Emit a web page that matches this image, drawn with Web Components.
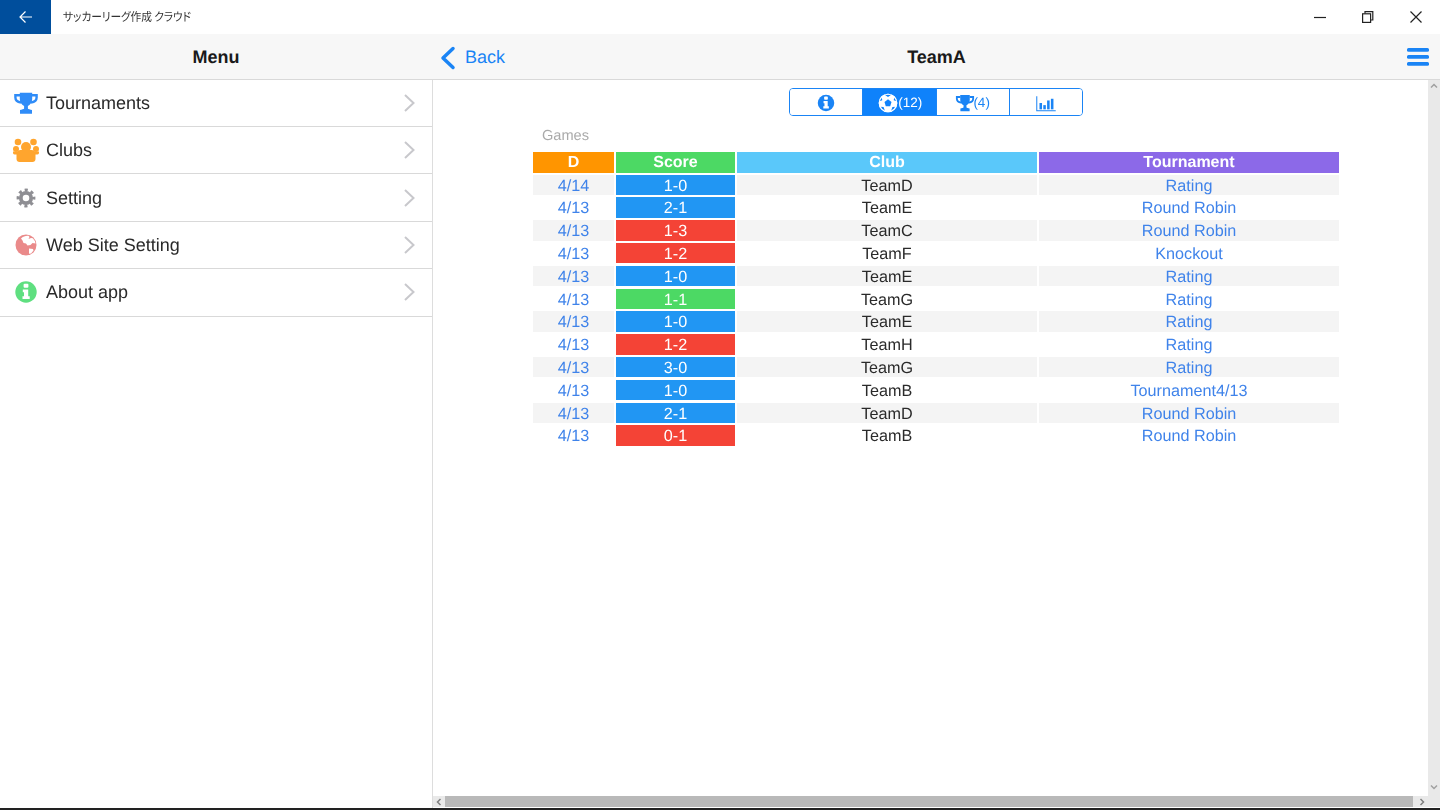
<!DOCTYPE html>
<html lang="ja">
<head>
<meta charset="utf-8">
<title>TeamA</title>
<style>
  html, body { margin: 0; height: 100%; overflow: hidden; background: #fff; }
  body { font-family: "Liberation Sans", Arial, sans-serif; text-rendering: geometricPrecision; }
</style>
</head>
<body>
<app-window>
  <title-bar slot="top" label="サッカーリーグ作成 クラウド"></title-bar>
  <menu-panel slot="left" heading="Menu">
    <menu-item icon="trophy" tint="#2f8cf8" label="Tournaments"></menu-item>
    <menu-item icon="group" tint="#ffa52e" label="Clubs"></menu-item>
    <menu-item icon="gear" tint="#8e8e93" label="Setting"></menu-item>
    <menu-item icon="globe" tint="#ea8a8a" label="Web Site Setting"></menu-item>
    <menu-item icon="info" tint="#5fdf80" label="About app"></menu-item>
  </menu-panel>
  <detail-panel slot="right" heading="TeamA">
    <seg-control>
      <seg-button icon="info" size="20"></seg-button>
      <seg-button icon="ball" size="24" count="(12)" active></seg-button>
      <seg-button icon="trophy" size="20" count="(4)"></seg-button>
      <seg-button icon="chart" size="22"></seg-button>
    </seg-control>
    <games-table caption="Games">
      <game-row date="4/14" score="1-0" result="win" club="TeamD" tournament="Rating"></game-row>
      <game-row date="4/13" score="2-1" result="win" club="TeamE" tournament="Round Robin"></game-row>
      <game-row date="4/13" score="1-3" result="lose" club="TeamC" tournament="Round Robin"></game-row>
      <game-row date="4/13" score="1-2" result="lose" club="TeamF" tournament="Knockout"></game-row>
      <game-row date="4/13" score="1-0" result="win" club="TeamE" tournament="Rating"></game-row>
      <game-row date="4/13" score="1-1" result="draw" club="TeamG" tournament="Rating"></game-row>
      <game-row date="4/13" score="1-0" result="win" club="TeamE" tournament="Rating"></game-row>
      <game-row date="4/13" score="1-2" result="lose" club="TeamH" tournament="Rating"></game-row>
      <game-row date="4/13" score="3-0" result="win" club="TeamG" tournament="Rating"></game-row>
      <game-row date="4/13" score="1-0" result="win" club="TeamB" tournament="Tournament4/13"></game-row>
      <game-row date="4/13" score="2-1" result="win" club="TeamD" tournament="Round Robin"></game-row>
      <game-row date="4/13" score="0-1" result="lose" club="TeamB" tournament="Round Robin"></game-row>
    </games-table>
  </detail-panel>
</app-window>

<script>
const ICONS = {
  trophy: `<path fill="currentColor" d="M6.800 2.700h12.400v6.300c0 3.600-2.300 6-4.300 7v2.500c0 .8 2.600 1 4.100 1.500v3.700H7v-3.700c1.500-.5 4.100-.7 4.100-1.500V16c-2-1-4.300-3.400-4.300-7z"/>
    <path fill="none" stroke="currentColor" stroke-width="2.400" d="M7 5.200H2.400v2.300c0 2.800 2.400 4.600 5.600 5M19 5.200h4.600v2.300c0 2.800-2.400 4.600-5.600 5"/>`,
  group: `<g fill="currentColor"><circle cx="5" cy="5" r="3.300"/><circle cx="20.500" cy="5" r="3.300"/><circle cx="3" cy="12" r="3"/><circle cx="23" cy="12" r="3"/>
    <circle cx="13" cy="10" r="5"/><path d="M3.500 16.500c0-2.500 2-3.500 4-3.500h11c2 0 4 1 4 3.500V22c0 1.800-1.300 3-3 3h-13c-1.700 0-3-1.200-3-3z"/>
    <path d="M0 14.500h4v3H1.500C.5 17.500 0 16.500 0 15.500zM26 14.500h-4v3h2.500c1 0 1.500-1 1.500-2z"/></g>`,
  gear: `<g fill="none" stroke="currentColor"><circle cx="13" cy="13" r="5.200" stroke-width="3.800"/><circle cx="13" cy="13" r="8" stroke-width="2.800" stroke-dasharray="3.140 3.140" stroke-dashoffset="1.570"/></g>`,
  globe: `<circle cx="13" cy="13" r="10.500" fill="currentColor"/>
    <path fill="#fff" d="M8 6.500c2-2 5-3 7.500-2.700l1 1.200-1 2 2.500-1 1.800.3 2.200 3 .5 2.200-3-.5-2 2-3 .5-1.500-2-2.500-.5-1-2.500zM16 16.500l4 .5.500 1.500-2.500 3-2 .3z"/>`,
  info: `<circle cx="13" cy="13" r="10.700" fill="currentColor"/>
    <rect x="10.600" y="4.700" width="4.800" height="4" rx="1" fill="#fff"/><path fill="#fff" d="M9.800 10.500h5.400v6.800h1.500V20H9.500v-2.700H11v-4.100H9.800z"/>`,
  ball: `<circle cx="13" cy="13" r="10" fill="#fff"/>
    <g fill="currentColor"><path d="M13 9l3.800 2.800-1.400 4.600h-4.800l-1.400-4.600z"/><path d="M9 3l4 .5 4-.5v.8L13 6.500 9 3.800zM20 5.500l3 6-3.800-1.500zM6 5.500l.8 4.500-3.800 1.500zM3.500 17l4.700.2 1.500 4.500-3 .2zM22.500 17l-3.200 4.900-3-.2 1.500-4.500z"/></g>
    <circle cx="13" cy="13" r="9.500" fill="none" stroke="#fff" stroke-width="1.300"/>`,
  chart: `<g fill="currentColor"><path d="M1.500 5h1.200v16.500h21.800v1.300h-23z"/><rect x="5.300" y="13" width="3" height="7.500"/><rect x="9.800" y="15.500" width="3" height="5"/><rect x="14.300" y="10" width="3" height="10.500"/><rect x="18.800" y="8" width="3" height="12.500"/></g>`
};

class AppWindow extends HTMLElement {
  constructor() {
    super();
    this.attachShadow({ mode: "open" }).innerHTML = `
      <style>
        :host { display: flex; flex-direction: column; width: 1440px; height: 810px; overflow: hidden; filter: blur(.3px); }
        .body { display: flex; flex: 1; min-height: 0; }
        .edge { height: 2px; background: #222; flex: none; }
      </style>
      <slot name="top"></slot>
      <div class="body"><slot name="left"></slot><slot name="right"></slot></div>
      <div class="edge"></div>`;
  }
}

class FaIcon extends HTMLElement {
  connectedCallback() {
    const size = this.getAttribute("size") || 26;
    this.attachShadow({ mode: "open" }).innerHTML = `
      <style>:host { display: inline-flex; flex: none; } svg { display: block; }</style>
      <svg width="${size}" height="${size}" viewBox="0 0 26 26">${ICONS[this.getAttribute("name")]}</svg>`;
  }
}

class TitleBar extends HTMLElement {
  connectedCallback() {
    this.attachShadow({ mode: "open" }).innerHTML = `
      <style>
        :host { display: flex; align-items: center; height: 34px; flex: none; background: #fff; }
        .back { width: 51px; height: 34px; background: #004e9c; display: flex; align-items: center; justify-content: center; }
        .label { margin: -2px 0 0 12px; flex: 1; font: 12px "Noto Sans CJK JP", sans-serif; color: #333; font-feature-settings: "palt"; letter-spacing: -.1px; transform: scaleX(.895); transform-origin: left center; }
        .ctl { width: 48px; display: flex; justify-content: center; }
        svg { display: block; }
      </style>
      <div class="back"><svg width="14" height="14" viewBox="0 0 14 14" fill="none" stroke="#fff" stroke-width="1.200"><path d="M13 7H1M6.500 1.500L1 7l5.500 5.500"/></svg></div>
      <div class="label">${this.getAttribute("label")}</div>
      <div class="ctl"><svg width="12" height="12" viewBox="0 0 12 12" stroke="#222" stroke-width="1.200"><path d="M0 6.500h12"/></svg></div>
      <div class="ctl"><svg width="12" height="12" viewBox="0 0 12 12" fill="none" stroke="#222" stroke-width="1.200"><path d="M3 2.500V.6h7.800v8.400H9"/><rect x=".6" y="2.800" width="8" height="8.600"/></svg></div>
      <div class="ctl"><svg width="12" height="12" viewBox="0 0 12 12" stroke="#222" stroke-width="1.200"><path d="M.5.500l11 11M11.500.500l-11 11"/></svg></div>`;
  }
}

class MenuPanel extends HTMLElement {
  connectedCallback() {
    this.attachShadow({ mode: "open" }).innerHTML = `
      <style>
        :host { display: flex; flex-direction: column; width: 433px; flex: none; height: 100%; }
        .head { height: 41.600px; display: flex; align-items: center; justify-content: center; background: #f7f7f7; border-bottom: 1px solid #d9d9d9; font-size: 18px; font-weight: bold; color: #1a1a1a; padding-top: 3px; padding-right: 1px; flex: none; }
        .list { flex: 1; border-right: 1px solid #ddd; }
      </style>
      <div class="head">${this.getAttribute("heading")}</div>
      <div class="list"><slot></slot></div>`;
  }
}

class MenuItem extends HTMLElement {
  connectedCallback() {
    this.attachShadow({ mode: "open" }).innerHTML = `
      <style>
        :host { display: flex; align-items: center; height: 47.400px; box-sizing: border-box; border-bottom: 1px solid #d9d9d9; padding-left: 13px; font-size: 18px; color: #2a2a2a; }
        fa-icon { color: ${this.getAttribute("tint")}; margin-right: 7px; }
        .label { flex: 1; padding-top: 1px; }
        svg { margin-right: 17px; display: block; }
      </style>
      <fa-icon name="${this.getAttribute("icon")}"></fa-icon>
      <div class="label">${this.getAttribute("label")}</div>
      <svg width="11" height="18" viewBox="0 0 11 18" fill="none" stroke="#c8c8cc" stroke-width="2"><path d="M1 1l8.500 8L1 17"/></svg>`;
  }
}

class DetailPanel extends HTMLElement {
  connectedCallback() {
    this.attachShadow({ mode: "open" }).innerHTML = `
      <style>
        :host { display: flex; flex-direction: column; flex: 1; min-width: 0; height: 100%; }
        .head { height: 41.600px; padding-top: 3px; flex: none; display: grid; grid-template-columns: 1fr auto 1fr; align-items: center; background: #f7f7f7; border-bottom: 1px solid #d9d9d9; }
        .back { display: flex; align-items: center; gap: 9px; padding-left: 7px; color: #1a84f5; font-size: 18px; }
        .title { font-size: 18px; font-weight: bold; color: #1a1a1a; }
        .menu { justify-self: end; margin: -2px 11px 0 0; display: block; }
        .middle { flex: 1; display: flex; min-height: 0; }
        .content { flex: 1; padding: 8px 0 0 11px; display: flex; flex-direction: column; align-items: center; }
        .vbar { width: 12px; flex: none; background: #e9e9e9; display: flex; flex-direction: column; justify-content: space-between; align-items: center; padding: 3px 0 6px; box-sizing: border-box; }
        .hbar { height: 11px; flex: none; background: #e9e9e9; display: flex; align-items: center; margin-bottom: 1px; }
        .thumb { flex: 1; height: 100%; background: #b9b9b9; margin-right: 3px; }
        .end { width: 12px; display: flex; justify-content: center; }
        svg { display: block; }
      </style>
      <div class="head">
        <div class="back"><svg width="16" height="24" viewBox="0 0 16 24" fill="none" stroke="#1a84f5" stroke-width="3.500" stroke-linecap="round" stroke-linejoin="round"><path d="M13 2.500L3 12l10 9.500"/></svg>Back</div>
        <div class="title">${this.getAttribute("heading")}</div>
        <svg class="menu" width="22" height="18" viewBox="0 0 22 18" fill="#1a84f5"><rect y="0" width="22" height="3.800" rx="1.500"/><rect y="7" width="22" height="3.800" rx="1.500"/><rect y="14" width="22" height="3.800" rx="1.500"/></svg>
      </div>
      <div class="middle">
        <div class="content"><slot></slot></div>
        <div class="vbar">
          <svg width="8" height="6" viewBox="0 0 8 6" fill="none" stroke="#a0a0a0" stroke-width="1.500"><path d="M1 4.500L4 1.500l3 3"/></svg>
          <svg width="8" height="6" viewBox="0 0 8 6" fill="none" stroke="#a0a0a0" stroke-width="1.500"><path d="M1 1.500L4 4.500l3-3"/></svg>
        </div>
      </div>
      <div class="hbar">
        <div class="end"><svg width="6" height="8" viewBox="0 0 6 8" fill="none" stroke="#808080" stroke-width="1.500"><path d="M4.500 1L1.500 4l3 3"/></svg></div>
        <div class="thumb"></div>
        <div class="end"><svg width="6" height="8" viewBox="0 0 6 8" fill="none" stroke="#808080" stroke-width="1.500"><path d="M1.500 1L4.500 4l-3 3"/></svg></div>
        <div class="end"></div>
      </div>`;
  }
}

class SegControl extends HTMLElement {
  constructor() {
    super();
    this.attachShadow({ mode: "open" }).innerHTML = `
      <style>
        :host { display: flex; width: 294px; height: 28px; box-sizing: border-box; border: 1px solid #1a84f5; border-radius: 4px; overflow: hidden; flex: none; }
      </style>
      <slot></slot>`;
  }
}

class SegButton extends HTMLElement {
  connectedCallback() {
    const active = this.hasAttribute("active");
    this.attachShadow({ mode: "open" }).innerHTML = `
      <style>
        :host { flex: 1; display: flex; align-items: center; justify-content: center; padding-top: 3px; font-size: 13.500px; color: ${active ? "#fff" : "#1a84f5"}; background: ${active ? "#0f82fb" : "#fff"}; border-left: 1px solid #1a84f5; }
        :host(:first-child) { border-left: none; }
        fa-icon { color: ${active ? "#0f82fb" : "#1a84f5"}; }
        span { position: relative; top: -1px; margin-left: -2px; }
      </style>
      <fa-icon name="${this.getAttribute("icon")}" size="${this.getAttribute("size")}"></fa-icon>
      ${this.getAttribute("count") ? `<span>${this.getAttribute("count")}</span>` : ""}`;
  }
}

const COLUMNS = "81px 119px 300px 300px";

class GamesTable extends HTMLElement {
  connectedCallback() {
    this.attachShadow({ mode: "open" }).innerHTML = `
      <style>
        :host { display: block; width: 806px; margin-top: 10px; }
        .caption { font-size: 14.600px; line-height: 20px; color: #aaa; padding-left: 9px; margin-bottom: 6px; }
        .head { display: grid; grid-template-columns: ${COLUMNS}; grid-template-rows: 21px; gap: 2px; margin-bottom: 2px; color: #fff; font-size: 16px; font-weight: bold; text-align: center; }
        .head div { height: 21px; line-height: 22px; }
      </style>
      <div class="caption">${this.getAttribute("caption")}</div>
      <div class="head">
        <div style="background:#ff9500">D</div>
        <div style="background:#4cd964">Score</div>
        <div style="background:#5ac8fa">Club</div>
        <div style="background:#8c69e8">Tournament</div>
      </div>
      <slot></slot>`;
  }
}

class GameRow extends HTMLElement {
  connectedCallback() {
    const colours = { win: "#2196f3", lose: "#f44336", draw: "#4cd964" };
    const odd = [...this.parentNode.children].indexOf(this) % 2 === 0;
    this.attachShadow({ mode: "open" }).innerHTML = `
      <style>
        :host { display: grid; grid-template-columns: ${COLUMNS}; grid-template-rows: 20.500px; gap: 2px; height: 20.500px; margin-bottom: 2.300px; font-size: 16.200px; line-height: 23px; text-align: center; }
        div { background: ${odd ? "#f4f4f4" : "#fff"}; height: 20.500px; }
        .link { color: #3f83ea; }
        .club { color: #2a2a2a; }
        .score { color: #fff; background: ${colours[this.getAttribute("result")]}; }
      </style>
      <div class="link">${this.getAttribute("date")}</div>
      <div class="score">${this.getAttribute("score")}</div>
      <div class="club">${this.getAttribute("club")}</div>
      <div class="link">${this.getAttribute("tournament")}</div>`;
  }
}

customElements.define("fa-icon", FaIcon);
customElements.define("app-window", AppWindow);
customElements.define("title-bar", TitleBar);
customElements.define("menu-panel", MenuPanel);
customElements.define("menu-item", MenuItem);
customElements.define("detail-panel", DetailPanel);
customElements.define("seg-control", SegControl);
customElements.define("seg-button", SegButton);
customElements.define("games-table", GamesTable);
customElements.define("game-row", GameRow);
</script>
</body>
</html>
